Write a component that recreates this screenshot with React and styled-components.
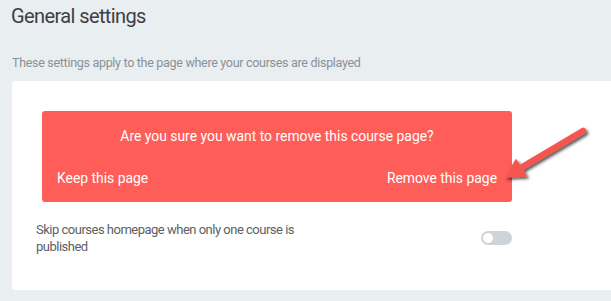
import React, { useState } from 'react';
import styled, { createGlobalStyle } from 'styled-components';

const GlobalStyle = createGlobalStyle`
  html, body {
    margin: 0;
    padding: 0;
    background: #e9eef0;
    font-family: Roboto, "Liberation Sans", sans-serif;
    overflow: hidden;
  }
`;

const Page = styled.div`
  position: relative;
  width: 611px;
  height: 301px;
  padding: 4px 0 0 11px;
  box-sizing: border-box;
`;

const Title = styled.h1`
  margin: 0;
  font-size: 20px;
  font-weight: 400;
  letter-spacing: -0.6px;
  line-height: 24px;
  color: #3d4045;
`;

const Subtitle = styled.p`
  margin: 26px 0 0 1px;
  font-size: 12.5px;
  letter-spacing: -0.3px;
  line-height: 18px;
  color: #8a9196;
`;

const Card = styled.div`
  margin: 9px 0 0 1px;
  height: 209px;
  background: #fff;
  border-radius: 3px 0 0 3px;
  padding: 30px 0 0 24px;
  box-sizing: border-box;
`;

const Confirm = styled.div`
  margin-left: 6px;
  width: 470px;
  height: 91px;
  background: #fe5d58;
  border-radius: 3px;
  color: #fff;
  font-size: 13.9px;
  box-sizing: border-box;
  padding: 16px 15px 0;
  display: flex;
  flex-direction: column;
`;

const Question = styled.div`
  text-align: center;
  line-height: 18px;
`;

const Actions = styled.div`
  margin-top: 24px;
  display: flex;
  justify-content: space-between;
  line-height: 18px;
`;

const Action = styled.span`
  cursor: pointer;
`;

const SettingRow = styled.div`
  margin-top: 20px;
  width: 476px;
  display: flex;
  align-items: center;
  justify-content: space-between;
`;

const SettingLabel = styled.div`
  width: 300px;
  font-size: 13px;
  letter-spacing: -0.5px;
  line-height: 16.5px;
  color: #5b5f64;
`;

const Toggle = styled.button`
  width: 31px;
  height: 14px;
  border: none;
  padding: 0;
  border-radius: 7px;
  background: ${(p) => (p.$on ? '#fe5d58' : '#cfd4d9')};
  position: relative;
  cursor: pointer;
  margin-bottom: 2px;

  &::after {
    content: '';
    position: absolute;
    top: 2px;
    left: ${(p) => (p.$on ? '19px' : '2px')};
    width: 10px;
    height: 10px;
    border-radius: 50%;
    background: #fff;
  }
`;

const Arrow = styled.svg`
  position: absolute;
  left: 0;
  top: 0;
  pointer-events: none;
`;

const App = () => {
  const [skip, setSkip] = useState(false);

  return (
    <Page>
      <GlobalStyle />
      <Title>General settings</Title>
      <Subtitle>These settings apply to the page where your courses are displayed</Subtitle>
      <Card>
        <Confirm>
          <Question>Are you sure you want to remove this course page?</Question>
          <Actions>
            <Action>Keep this page</Action>
            <Action>Remove this page</Action>
          </Actions>
        </Confirm>
        <SettingRow>
          <SettingLabel>Skip courses homepage when only one course is published</SettingLabel>
          <Toggle $on={skip} onClick={() => setSkip(!skip)} />
        </SettingRow>
      </Card>
      <Arrow width="611" height="301" viewBox="0 0 611 301">
        <defs>
          <filter id="arrowShadow" x="-20%" y="-20%" width="150%" height="150%">
            <feDropShadow dx="2" dy="2" stdDeviation="1.5" floodColor="#000" floodOpacity="0.65" />
          </filter>
        </defs>
        <g filter="url(#arrowShadow)" fill="#f4574f" stroke="#f4574f">
          <line x1="519" y1="169" x2="583" y2="131" strokeWidth="6.5" strokeLinecap="round" />
          <polygon points="506,177 516,160 526,176" strokeWidth="1.5" strokeLinejoin="round" />
        </g>
      </Arrow>
    </Page>
  );
};

export default App;
